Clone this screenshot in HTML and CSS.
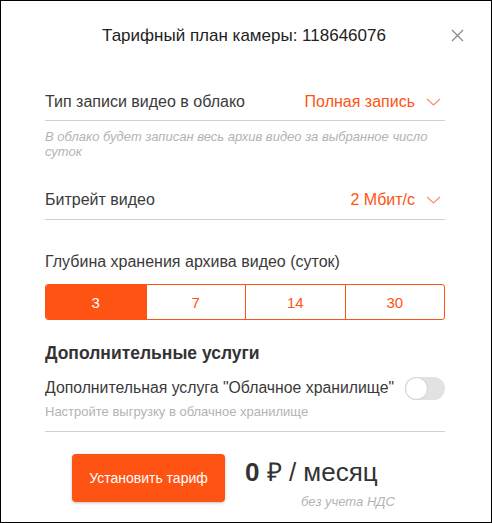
FILE: index.html
```html
<!DOCTYPE html>
<html lang="ru">
<head>
    <meta charset="UTF-8">
    <title>Тарифный план камеры</title>
    <link rel="stylesheet" href="styles.css">
</head>
<body>
    <div class="modal">
        <div class="modal-header">
            <span class="modal-title">Тарифный план камеры: 118646076</span>
            <span class="close-btn">
                <svg width="13" height="13" viewBox="0 0 13 13"><path d="M1 1L12 12M12 1L1 12" stroke="#8a8a8a" stroke-width="1.2" fill="none"/></svg>
            </span>
        </div>

        <div class="modal-body">
            <div class="select-row first">
                <span class="label">Тип записи видео в облако</span>
                <span class="select-value">Полная запись
                    <svg class="chevron" width="15" height="8" viewBox="0 0 15 8"><path d="M1 1L7.5 7L14 1" stroke="#ff8c66" stroke-width="1.2" fill="none"/></svg>
                </span>
            </div>
            <div class="hint">В облако будет записан весь архив видео за выбранное число суток</div>

            <div class="select-row second">
                <span class="label">Битрейт видео</span>
                <span class="select-value">2 Мбит/с
                    <svg class="chevron" width="15" height="8" viewBox="0 0 15 8"><path d="M1 1L7.5 7L14 1" stroke="#ff8c66" stroke-width="1.2" fill="none"/></svg>
                </span>
            </div>

            <div class="section-label">Глубина хранения архива видео (суток)</div>
            <div class="segments">
                <div class="segment active">3</div>
                <div class="segment">7</div>
                <div class="segment">14</div>
                <div class="segment">30</div>
            </div>

            <div class="services-title">Дополнительные услуги</div>
            <div class="service">
                <div class="service-row">
                    <span class="label">Дополнительная услуга "Облачное хранилище"</span>
                    <span class="toggle"><span class="knob"></span></span>
                </div>
                <div class="service-hint">Настройте выгрузку в облачное хранилище</div>
            </div>

            <div class="footer">
                <button class="submit-btn">Установить тариф</button>
                <div class="price">
                    <div class="price-value"><b>0</b> ₽ / месяц</div>
                    <div class="price-note">без учета НДС</div>
                </div>
            </div>
        </div>
    </div>
</body>
</html>
```

FILE: styles.css
```css
body {
    margin: 0;
    font-family: "Liberation Sans", Arial, sans-serif;
    color: #333;
    background: #fff;
}
.modal {
    box-sizing: border-box;
    width: 492px;
    height: 523px;
    border: 1px solid #000;
    background: #fff;
}
.modal-header {
    height: 68px;
    display: flex;
    align-items: center;
    justify-content: center;
    position: relative;
}
.modal-title {
    font-size: 17px;
    color: #222;
    padding-top: 1px;
    margin-left: -4px;
}
.close-btn {
    position: absolute;
    right: 27px;
    top: 28px;
    line-height: 0;
}
.modal-body {
    padding: 0 46px 0 44px;
}
.select-row {
    display: flex;
    justify-content: space-between;
    align-items: center;
    line-height: 20px;
    font-size: 16px;
    border-bottom: 1px solid #cfcfcf;
}
.select-row.first {
    padding: 23px 0 8px;
}
.select-row.second {
    padding: 31px 0 9px;
}
.label {
    color: #3a3a3a;
}
.select-value {
    color: #ff5314;
    display: flex;
    align-items: center;
    margin-right: 4px;
}
.chevron {
    margin-left: 11px;
}
.hint {
    margin-top: 8px;
    font-size: 13px;
    line-height: 15px;
    font-style: italic;
    color: #b3b3b3;
    padding-right: 10px;
}
.section-label {
    margin-top: 32px;
    font-size: 16px;
    line-height: 20px;
    color: #3a3a3a;
}
.segments {
    margin-top: 12px;
    display: grid;
    grid-template-columns: repeat(4, 1fr);
    height: 36px;
    border: 1px solid #ff5314;
    border-radius: 3px;
    box-sizing: border-box;
    overflow: hidden;
}
.segment {
    display: flex;
    align-items: center;
    justify-content: center;
    font-size: 15px;
    color: #ff5314;
    border-left: 1px solid #ff5314;
}
.segment:first-child {
    border-left: none;
}
.segment.active {
    background: #ff5314;
    color: #fff;
}
.services-title {
    margin-top: 23px;
    font-size: 17.5px;
    line-height: 20px;
    font-weight: bold;
    color: #333;
}
.service {
    margin-top: 12px;
    padding-bottom: 11px;
    border-bottom: 1px solid #cfcfcf;
}
.service-row {
    display: flex;
    justify-content: space-between;
    align-items: center;
    font-size: 15.8px;
    line-height: 20px;
}
.toggle {
    width: 40px;
    height: 23px;
    border-radius: 12px;
    background: #e2e2e2;
    position: relative;
    margin-top: 2px;
}
.knob {
    position: absolute;
    left: 1px;
    top: 1px;
    width: 21px;
    height: 21px;
    border-radius: 50%;
    background: #fff;
    box-shadow: 0 0 0 1px #d6d6d6;
}
.service-hint {
    margin-top: 4px;
    font-size: 13px;
    line-height: 16px;
    color: #b3b3b3;
}
.footer {
    margin-top: 22px;
    padding-left: 27px;
    display: flex;
    align-items: flex-start;
    gap: 20px;
}
.submit-btn {
    width: 153px;
    height: 48px;
    border: none;
    border-radius: 4px;
    background: #ff5314;
    color: #fff;
    font-family: inherit;
    font-size: 14px;
    box-shadow: 0 1px 3px rgba(0, 0, 0, 0.25);
}
.price {
    padding-top: 3px;
}
.price-value {
    font-size: 26px;
    line-height: 30px;
    color: #333;
}
.price-note {
    margin-top: 7px;
    padding-left: 56px;
    font-size: 13px;
    line-height: 16px;
    font-style: italic;
    color: #b3b3b3;
}
```
